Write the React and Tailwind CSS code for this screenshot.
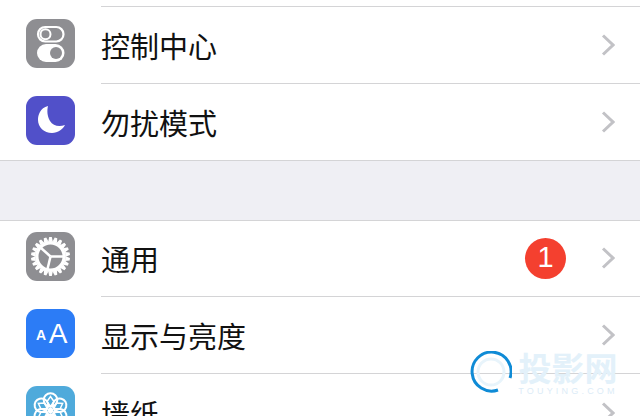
import React from 'react';

const cjk = 'font-["Noto_Sans_CJK_SC","Liberation_Sans",sans-serif]';

const Chevron = () => (
  <svg width="14" height="22" viewBox="0 0 14 22" fill="none" className="shrink-0">
    <path d="M2 1.5L12 11L2 20.5" stroke="#c2c2c6" strokeWidth="3" />
  </svg>
);

const ControlIcon = () => (
  <svg width="49" height="49" viewBox="0 0 49 49">
    <rect width="49" height="49" rx="11" fill="#8e8e92" />
    <rect x="12" y="8" width="25.500" height="14.500" rx="7.200" fill="none" stroke="#fff" strokeWidth="2.200" />
    <circle cx="19.500" cy="15.200" r="5" fill="none" stroke="#fff" strokeWidth="2" />
    <rect x="11" y="25" width="27.500" height="18" rx="9" fill="#fff" />
    <circle cx="30" cy="34" r="6" fill="#8e8e92" />
  </svg>
);

const MoonIcon = () => (
  <svg width="49" height="49" viewBox="0 0 49 49">
    <rect width="49" height="49" rx="11" fill="#5150c9" />
    <path d="M22 10C14 12 12 19 12 24C12 31 18 37 26 37C32 37 37 33 39 29C33 31 27 30 24 25C21 20 21 14 22 10Z" fill="#fff" />
  </svg>
);

const GearIcon = () => {
  const teeth = Array.from({ length: 22 }, (_, i) => (i * 360) / 22);
  return (
    <svg width="49" height="49" viewBox="0 0 49 49">
      <rect width="49" height="49" rx="11" fill="#8e8e92" />
      <g transform="translate(24.500 24.500)">
        {teeth.map((a) => (
          <path key={a} d="M-2.300 -15L-1.300 -19.500L1.300 -19.500L2.300 -15Z" fill="#fff" transform={`rotate(${a})`} />
        ))}
        <circle r="13.700" fill="none" stroke="#fff" strokeWidth="3.400" />
        <g stroke="#fff" strokeWidth="2.500">
          <path d="M0 0L12.500 0" />
          <path d="M0 0L-3 12.500" />
          <path d="M0 0L-9.500 -8.500" />
        </g>
      </g>
    </svg>
  );
};

const DisplayIcon = () => (
  <svg width="49" height="49" viewBox="0 0 49 49">
    <rect width="49" height="49" rx="11" fill="#2c7cf6" />
    <text x="15" y="31" textAnchor="middle" fontSize="14" fontWeight="700" fill="#fff" fontFamily="Liberation Sans, sans-serif">A</text>
    <text x="32" y="34" textAnchor="middle" fontSize="28" fill="#fff" fontFamily="Liberation Sans, sans-serif">A</text>
  </svg>
);

const WallpaperIcon = () => {
  const petals = [0, 60, 120, 180, 240, 300];
  return (
    <svg width="49" height="49" viewBox="0 0 49 49">
      <rect width="49" height="49" rx="11" fill="#4faadb" />
      <g transform="translate(24.500 24.500)" fill="none" stroke="#fff" strokeWidth="2">
        {petals.map((a) => (
          <g key={a} transform={`rotate(${a})`}>
            <circle cx="0" cy="-10.500" r="6.800" />
            <path d="M0 -4L3.500 -9L0 -14L-3.500 -9Z" strokeWidth="1.500" />
          </g>
        ))}
        <circle r="2.800" fill="#fff" stroke="none" />
      </g>
    </svg>
  );
};

const Row = ({ icon, label, badge, height, iconTop, last, contentClass }) => (
  <div className={`flex pl-[26px] ${height}`}>
    <div className={`w-[75px] shrink-0 ${iconTop}`}>{icon}</div>
    <div className={`flex flex-1 items-center justify-between pr-[25px] ${last ? '' : 'border-b border-[#d4d4d6]'} ${contentClass || ''}`}>
      <span className={`text-[29px] leading-[40px] text-[#111] ${cjk}`}>{label}</span>
      <div className="flex items-center">
        {badge && (
          <span className="mr-[35px] flex h-[41px] w-[41px] items-center justify-center rounded-full bg-[#f4402f] font-['Liberation_Sans',sans-serif] text-[29px] text-white">
            {badge}
          </span>
        )}
        <Chevron />
      </div>
    </div>
  </div>
);

export default function App() {
  return (
    <div className="relative h-[416px] w-[640px] overflow-hidden bg-white">
      <div className="ml-[101px] h-[7px] border-b border-[#d4d4d6]" />
      <Row icon={<ControlIcon />} label="控制中心" height="h-[77px]" iconTop="pt-[12px]" />
      <Row icon={<MoonIcon />} label="勿扰模式" height="h-[76px]" iconTop="pt-[12px]" last />
      <div className="h-[61px] border-y border-[#d4d4d6] bg-[#efeff4]" />
      <Row icon={<GearIcon />} label="通用" badge="1" height="h-[76px]" iconTop="pt-[11px]" contentClass="pb-[1px]" />
      <Row icon={<DisplayIcon />} label="显示与亮度" height="h-[77px]" iconTop="pt-[12px]" />
      <Row icon={<WallpaperIcon />} label="墙纸" height="h-[77px]" iconTop="pt-[12px]" last />

      {/* watermark */}
      <div className="absolute left-[470px] top-[351px] flex items-start">
        <svg width="42" height="42" viewBox="0 0 42 42" fill="none">
          <path d="M40 27A19.500 19.500 0 1 0 28 39" stroke="#0f8bd6" strokeWidth="3" />
          <circle cx="21" cy="21" r="13" stroke="#e8f4fb" strokeWidth="3" />
        </svg>
        <div className="ml-[6px] flex w-[100px] flex-col items-center">
          <span className={`text-[33px] font-bold leading-[32px] text-[#e3f1fa] ${cjk}`}>投影网</span>
          <span className="mt-[4px] whitespace-nowrap font-['Liberation_Sans',sans-serif] text-[9px] leading-[8px] tracking-[3.200px] text-[#dcecf7]">TOUYING.COM</span>
        </div>
      </div>
    </div>
  );
}
